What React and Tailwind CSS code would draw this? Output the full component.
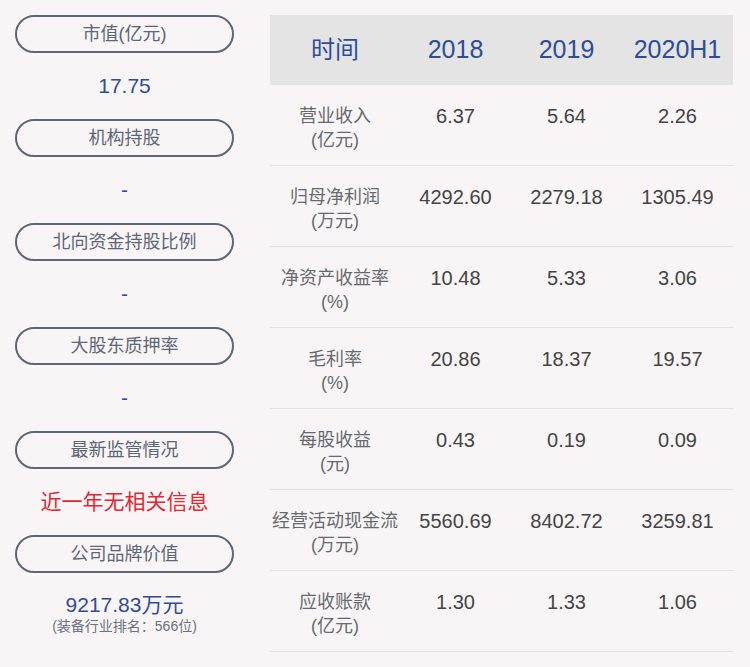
import React from "react";

const font = { fontFamily: '"Liberation Sans", "Noto Sans CJK SC", sans-serif' };

const sideItems = [
  { label: "市值(亿元)", value: "17.75" },
  { label: "机构持股", value: "-" },
  { label: "北向资金持股比例", value: "-" },
  { label: "大股东质押率", value: "-" },
  { label: "最新监管情况", value: "近一年无相关信息", red: true },
];

const rows = [
  { name: "营业收入", unit: "(亿元)", vals: ["6.37", "5.64", "2.26"] },
  { name: "归母净利润", unit: "(万元)", vals: ["4292.60", "2279.18", "1305.49"] },
  { name: "净资产收益率", unit: "(%)", vals: ["10.48", "5.33", "3.06"] },
  { name: "毛利率", unit: "(%)", vals: ["20.86", "18.37", "19.57"] },
  { name: "每股收益", unit: "(元)", vals: ["0.43", "0.19", "0.09"] },
  { name: "经营活动现金流", unit: "(万元)", vals: ["5560.69", "8402.72", "3259.81"] },
  { name: "应收账款", unit: "(亿元)", vals: ["1.30", "1.33", "1.06"] },
];

const Pill = ({ children }) => (
  <div className="h-[38px] w-[219px] rounded-full border-2 border-[#5c6677] flex items-center justify-center text-[18px] text-[#5c6677]">
    {children}
  </div>
);

export default function App() {
  return (
    <div className="w-[750px] h-[667px] bg-[#f9f5f6] flex overflow-hidden" style={font}>
      {/* left summary column */}
      <div className="w-[270px] pl-[15px] pt-[15px] flex flex-col">
        {sideItems.map((it) => (
          <div key={it.label} className="flex flex-col">
            <Pill>{it.label}</Pill>
            <div
              className={`h-[66px] w-[219px] flex items-center justify-center ${
                it.red ? "text-[21px] text-[#e3262f]" : "text-[21px] text-[#2d4d9c]"
              }`}
            >
              {it.value}
            </div>
          </div>
        ))}
        <Pill>公司品牌价值</Pill>
        <div className="w-[219px] pt-[20px] flex flex-col items-center">
          <div className="text-[21px] leading-[24px] text-[#2d4d9c]">9217.83万元</div>
          <div className="text-[14px] leading-[18px] text-[#6b7280]">(装备行业排名：566位)</div>
        </div>
      </div>

      {/* right table */}
      <div className="w-[463px] pt-[15px]">
        <div className="grid grid-cols-[130px_111px_111px_111px] h-[70px] bg-[#e4e4e4] items-center text-center text-[25px] text-[#2d4d9c]">
          <div className="text-[24px]">时间</div>
          <div>2018</div>
          <div>2019</div>
          <div>2020H1</div>
        </div>
        {rows.map((r) => (
          <div
            key={r.name}
            className="grid grid-cols-[130px_111px_111px_111px] h-[81px] border-b border-[#e3e3e3] pt-[19px] text-center"
          >
            <div className="text-[18px] leading-[24px] text-[#666a70]">
              <div>{r.name}</div>
              <div>{r.unit}</div>
            </div>
            {r.vals.map((v, i) => (
              <div key={i} className="text-[20px] leading-[24px] text-[#444444]">
                {v}
              </div>
            ))}
          </div>
        ))}
      </div>
    </div>
  );
}
